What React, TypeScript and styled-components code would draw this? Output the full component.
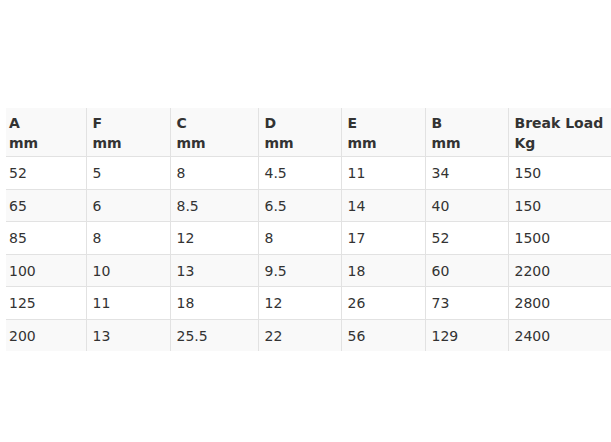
import React from "react";
import styled, { createGlobalStyle } from "styled-components";

const Global = createGlobalStyle`
  html, body { margin: 0; padding: 0; background: #fff; }
  body { font-family: "DejaVu Sans", Verdana, sans-serif; color: #333; }
`;

const Page = styled.div`
  padding: 108px 0 0 6px;
  width: 611px;
  box-sizing: border-box;
  overflow: hidden;
`;

const Table = styled.table`
  width: 605px;
  border-collapse: collapse;
  table-layout: fixed;
  font-size: 14px;
  line-height: 19.5px;
`;

const Th = styled.th`
  text-align: left;
  font-weight: bold;
  padding: 6px 6px 3px;
  vertical-align: top;
  background: #f9f9f9;
  border-left: 1px solid #e2e2e2;
  border-bottom: 1px solid #e2e2e2;
  &:first-child { border-left: none; padding-left: 3px; }
`;

const Row = styled.tr<{ $shade: boolean }>`
  background: ${(p) => (p.$shade ? "#f9f9f9" : "#ffffff")};
`;

const Td = styled.td<{ $last: boolean }>`
  padding: 7px 6px 5px;
  border-left: 1px solid #e2e2e2;
  border-bottom: ${(p) => (p.$last ? "none" : "1px solid #e2e2e2")};
  &:first-child { border-left: none; padding-left: 3px; }
`;

const widths = [80, 84, 88, 83, 84, 83, 103];
const headers: [string, string][] = [
  ["A", "mm"],
  ["F", "mm"],
  ["C", "mm"],
  ["D", "mm"],
  ["E", "mm"],
  ["B", "mm"],
  ["Break Load", "Kg"],
];
const rows = [
  ["52", "5", "8", "4.5", "11", "34", "150"],
  ["65", "6", "8.5", "6.5", "14", "40", "150"],
  ["85", "8", "12", "8", "17", "52", "1500"],
  ["100", "10", "13", "9.5", "18", "60", "2200"],
  ["125", "11", "18", "12", "26", "73", "2800"],
  ["200", "13", "25.5", "22", "56", "129", "2400"],
];

export default function App() {
  return (
    <>
      <Global />
      <Page>
        <Table>
          <colgroup>
            {widths.map((w, i) => (
              <col key={i} style={{ width: w }} />
            ))}
          </colgroup>
          <thead>
            <tr>
              {headers.map(([a, b], i) => (
                <Th key={i}>
                  {a}
                  <br />
                  {b}
                </Th>
              ))}
            </tr>
          </thead>
          <tbody>
            {rows.map((r, ri) => (
              <Row key={ri} $shade={ri % 2 === 1}>
                {r.map((c, ci) => (
                  <Td key={ci} $last={ri === rows.length - 1}>
                    {c}
                  </Td>
                ))}
              </Row>
            ))}
          </tbody>
        </Table>
      </Page>
    </>
  );
}
